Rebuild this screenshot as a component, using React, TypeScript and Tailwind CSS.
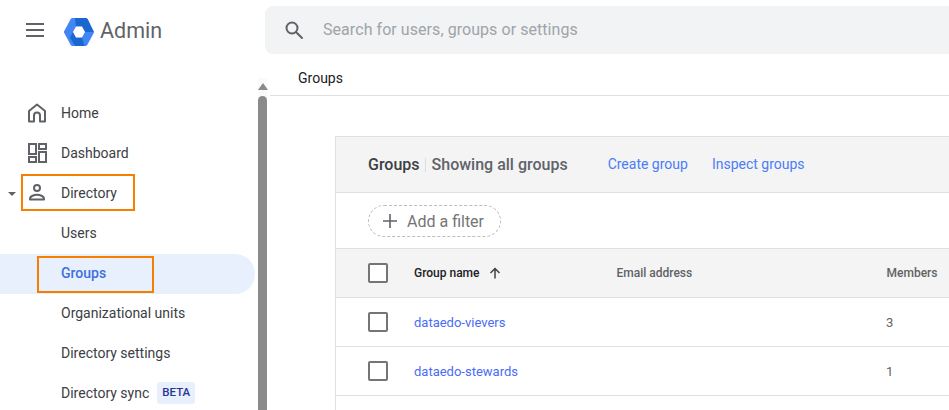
import React from "react";

const NavIcon = ({ name }: { name: string }) => {
  if (name === "home") {
    return (
      <svg width="24" height="24" viewBox="0 0 24 24" fill="none" stroke="#5f6368" strokeWidth="2">
        <path d="M4 20.500V10l8-6.500 8 6.500v10.500h-5v-6a3 3 0 0 0-6 0v6z" strokeLinejoin="round" />
      </svg>
    );
  }
  if (name === "dashboard") {
    return (
      <svg width="24" height="24" viewBox="0 0 24 24" fill="none" stroke="#5f6368" strokeWidth="2">
        <rect x="4" y="3" width="7" height="10" />
        <rect x="14" y="3" width="7" height="5" />
        <rect x="14" y="11" width="7" height="10" />
        <rect x="4" y="16" width="7" height="5" />
      </svg>
    );
  }
  return (
    <svg width="24" height="24" viewBox="0 0 24 24" fill="none" stroke="#5f6368" strokeWidth="2">
      <circle cx="12" cy="7" r="3" />
      <path d="M5 18.500v-1c0-2.400 4.300-3.700 7-3.700s7 1.300 7 3.700v1z" strokeLinejoin="round" />
    </svg>
  );
};

const Logo = () => (
  <svg width="30" height="28" viewBox="0 0 30 28" className="mt-[4px]">
    <path d="M2 14 8.500 2h13L28 14l-6.500 12h-13z" fill="#4285f4" stroke="#4285f4" strokeWidth="4" strokeLinejoin="round" />
    <path d="M11 0h11.500l1.500 1.500L29.500 14H21l-3-5.500h-6z" fill="#1a67d2" />
    <path d="M9 14l3 5.500h6l2.500 8.500H11l-5-8.500z" fill="#1a67d2" />
    <path d="M12 8.500h6l3 5.500-3 5.500h-6L9 14z" fill="#fff" />
  </svg>
);

const Checkbox = () => (
  <div className="h-5 w-5 rounded-[2px] border-2 border-[#757575] bg-white" />
);

const NavRow = ({ label, icon, active, badge }: { label: string; icon?: string; active?: boolean; badge?: string }) => (
  <div className={"flex h-10 items-center rounded-r-[20px] pb-[2px] pl-[25px] mr-[3px] " + (active ? "bg-[#e8f0fe]" : "")}>
    <div className="flex w-9 shrink-0 items-center">{icon && <NavIcon name={icon} />}</div>
    <span className={"text-sm " + (active ? "font-medium text-[#3f6fe0]" : "text-[#3c4043]")}>{label}</span>
    {badge && (
      <span className="ml-2 rounded-[3px] bg-[#e8f0fe] px-[5px] py-[2px] text-[11.5px] font-medium text-[#283593]">{badge}</span>
    )}
  </div>
);

const TableRow = ({ name, members }: { name: string; members: string }) => (
  <div className="flex h-[49px] items-center border-b border-[#e0e0e0] pl-[32px]">
    <Checkbox />
    <a className="ml-[26px] w-[472px] pt-[2px] text-[13px] text-[#4a6cf7]">{name}</a>
    <span className="pt-[2px] text-[13px] text-[#5f6368]">{members}</span>
  </div>
);

export default function App() {
  return (
    <div className="relative flex h-[410px] w-[949px] flex-col overflow-hidden bg-white font-['Roboto',sans-serif]">
      {/* top bar */}
      <div className="flex h-[60px] shrink-0 items-center">
        <div className="flex w-[265px] shrink-0 items-center pl-[26px]">
          <div className="flex h-[14px] w-[18px] flex-col justify-between">
            <div className="h-[2px] bg-[#5f6368]" />
            <div className="h-[2px] bg-[#5f6368]" />
            <div className="h-[2px] bg-[#5f6368]" />
          </div>
          <div className="ml-[20px] flex"><Logo /></div>
          <span className="ml-[6px] pt-[2px] text-[21.5px] text-[#5f6368]">Admin</span>
        </div>
        <div className="flex h-12 flex-1 items-center rounded-l-lg bg-[#f1f3f4] pl-[17px]">
          <svg width="24" height="24" viewBox="0 0 24 24" fill="none" stroke="#5f6368" strokeWidth="2">
            <circle cx="10" cy="10" r="5.500" />
            <path d="M14.200 14.200 20 20" strokeLinecap="round" />
          </svg>
          <span className="ml-[17px] text-base tracking-[0.06px] text-[#a0a4a8]">Search for users, groups or settings</span>
        </div>
      </div>

      <div className="flex min-h-0 flex-1">
        {/* sidebar */}
        <div className="relative w-[258px] shrink-0 pt-[34px]">
          <NavRow label="Home" icon="home" />
          <NavRow label="Dashboard" icon="dashboard" />
          <NavRow label="Directory" icon="person" />
          <NavRow label="Users" />
          <NavRow label="Groups" active />
          <NavRow label="Organizational units" />
          <NavRow label="Directory settings" />
          <NavRow label="Directory sync" badge="BETA" />
          <div className="absolute left-[8px] top-[132px] h-0 w-0 border-x-[4px] border-t-[4px] border-x-transparent border-t-[#5f6368]" />
        </div>

        {/* scrollbar */}
        <div className="mt-[18px] flex w-[9px] shrink-0 flex-col items-center bg-[#fafafa] pt-[5px]">
          <div className="h-0 w-0 border-x-[5px] border-b-[7px] border-x-transparent border-b-[#8a8a8a]" />
          <div className="mt-[6px] w-full flex-1 rounded-t-[5px] bg-[#8a8a8a]" />
        </div>

        {/* main */}
        <div className="min-w-0 flex-1 pl-[3px]">
          <div className="flex h-[36px] items-center border-b border-[#e0e0e0] pl-[28px] pt-px text-sm text-[#202124]">Groups</div>
          <div className="ml-[65px] mt-[40px] h-[300px] border-l border-t border-[#e0e0e0]">
            <div className="flex h-[56px] items-center border-b border-[#e0e0e0] bg-[#f4f4f4] pl-[32px] text-sm">
              <span className="text-base font-medium text-[#3c4043]">Groups</span>
              <span className="ml-[5px] mr-[6px] h-[14px] w-px bg-[#dadce0]" />
              <span className="text-base font-medium text-[#5f6368]">Showing all groups</span>
              <a className="ml-[40px] pb-px text-sm text-[#4a7cf7]">Create group</a>
              <a className="ml-[24px] pb-px text-sm text-[#4a7cf7]">Inspect groups</a>
            </div>
            <div className="flex h-[56px] items-center border-b border-[#e0e0e0] pl-[32px]">
              <div className="flex h-8 items-center rounded-full border border-dashed border-[#bdbdbd] pl-[13px] pr-4">
                <svg width="16" height="16" viewBox="0 0 16 16" fill="none" stroke="#5f6368" strokeWidth="1.600">
                  <path d="M8 1v14M1 8h14" />
                </svg>
                <span className="ml-[9px] pt-[2px] text-base text-[#757575]">Add a filter</span>
              </div>
            </div>
            <div className="flex h-[49px] items-center border-b border-[#e0e0e0] bg-[#f4f4f4] pl-[32px]">
              <Checkbox />
              <span className="ml-[26px] text-xs font-medium text-[#202124]">Group name</span>
              <svg className="ml-[9px]" width="12" height="12" viewBox="0 0 12 12" fill="none" stroke="#424242" strokeWidth="1.500">
                <path d="M6 11.500V1.500M1.500 6 6 1.500 10.500 6" />
              </svg>
              <span className="ml-[116px] w-[270px] text-xs font-medium text-[#5f6368]">Email address</span>
              <span className="text-xs font-medium text-[#5f6368]">Members</span>
            </div>
            <TableRow name="dataedo-vievers" members="3" />
            <TableRow name="dataedo-stewards" members="1" />
          </div>
        </div>
      </div>

      {/* orange annotation boxes */}
      <div className="absolute left-[21px] top-[174px] h-[37px] w-[114px] border-2 border-[#f77f00]" />
      <div className="absolute left-[37px] top-[256px] h-[37px] w-[117px] border-2 border-[#f77f00]" />
    </div>
  );
}
